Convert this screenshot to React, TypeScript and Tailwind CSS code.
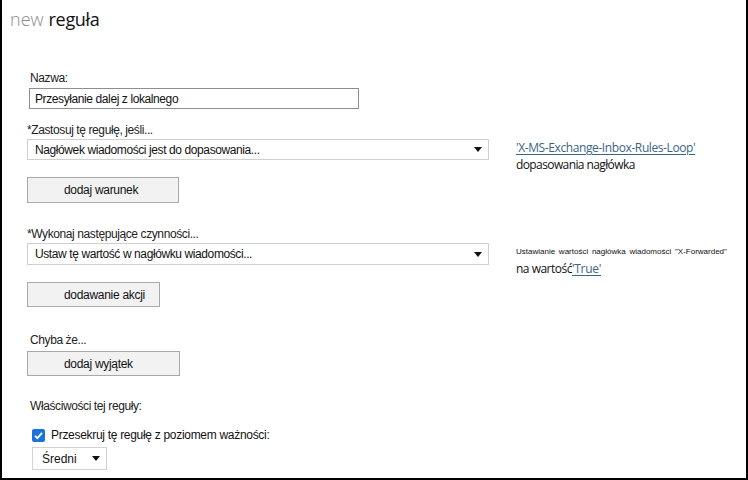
import React from "react";

const sans = { fontFamily: '"Liberation Sans", Arial, sans-serif' };
const openSans = { fontFamily: '"Open Sans", "Noto Sans", sans-serif' };

function Caret() {
  return (
    <svg width="8" height="5" viewBox="0 0 8 5" className="shrink-0">
      <path d="M0 0 L8 0 L4 5 Z" fill="#111" />
    </svg>
  );
}

function Select({ value, className }: { value: string; className: string }) {
  return (
    <div
      className={`flex items-center justify-between bg-white border border-[#cfcfcf] pl-[7px] pr-[6px] text-[12px] text-[#111] tracking-[-0.4px] ${className}`}
    >
      <span>{value}</span>
      <Caret />
    </div>
  );
}

function Button({ label, width, height, top }: { label: string; width: string; height: string; top: string }) {
  return (
    <div
      className={`${width} ${height} ${top} flex items-center pl-[36px] bg-[#f2f2f2] border border-[#a8a8a8] text-[12px] text-[#111] tracking-[-0.3px]`}
    >
      {label}
    </div>
  );
}

export default function App() {
  return (
    <div
      className="w-[748px] h-[480px] bg-white border-l-2 border-r-2 border-b-2 border-black overflow-hidden relative text-[#222]"
      style={sans}
    >
      {/* title */}
      <div className="ml-[8px] mt-[6px] h-[26px] text-[18px] leading-[26px] flex gap-[5px]" style={openSans}>
        <span className="text-[#8c8c8c] font-light">new</span>
        <span className="text-[#111] font-normal tracking-[-0.3px]">reguła</span>
      </div>

      {/* name */}
      <div className="ml-[28px] mt-[39px] text-[12px] leading-[14px] tracking-[-0.4px]">Nazwa:</div>
      <div className="ml-[27px] mt-[3px] w-[330px] h-[21px] border border-[#8e8e8e] flex items-center pl-[5px] text-[12px] text-[#111] tracking-[-0.4px]">
        Przesyłanie dalej z lokalnego
      </div>

      {/* conditions */}
      <div className="flex mt-[14px]">
        <div className="ml-[25px] w-[462px] flex flex-col">
          <div className="text-[12px] leading-[14px] tracking-[-0.4px]">*Zastosuj tę regułę, jeśli...</div>
          <Select value="Nagłówek wiadomości jest do dopasowania..." className="mt-[2px] h-[21px] w-[462px]" />
          <Button label="dodaj warunek" width="w-[152px]" height="h-[26px]" top="mt-[17px]" />
        </div>
        <div className="ml-[27px] mt-[17px] text-[12px] leading-[15px]" style={openSans}>
          <div className="text-[#3b6584] underline underline-offset-2 tracking-[-0.4px]">
            'X-MS-Exchange-Inbox-Rules-Loop'
          </div>
          <div className="text-[#111] mt-[2px] tracking-[-0.6px]">dopasowania nagłówka</div>
        </div>
      </div>

      {/* actions */}
      <div className="flex mt-[24px]">
        <div className="ml-[25px] w-[462px] flex flex-col">
          <div className="text-[12px] leading-[14px] tracking-[-0.4px]">*Wykonaj następujące czynności...</div>
          <Select value="Ustaw tę wartość w nagłówku wiadomości..." className="mt-[2px] h-[22px] w-[462px]" />
          <Button label="dodawanie akcji" width="w-[133px]" height="h-[25px]" top="mt-[17px]" />
        </div>
        <div className="ml-[27px] mt-[19px]">
          <div className="text-[8px] leading-[11px] text-[#111] whitespace-nowrap [word-spacing:1.5px]">
            Ustawianie wartości nagłówka wiadomości "X-Forwarded"
          </div>
          <div className="mt-[5px] text-[12px] leading-[14px] text-[#111]" style={openSans}>
            <span className="tracking-[-0.5px]">na wartość</span>
            <span className="text-[#3b6584] underline underline-offset-2 tracking-[-0.3px]">'True'</span>
          </div>
        </div>
      </div>

      {/* exceptions */}
      <div className="ml-[28px] mt-[26px] text-[12px] leading-[14px] tracking-[-0.4px]">Chyba że...</div>
      <div className="ml-[25px]">
        <Button label="dodaj wyjątek" width="w-[153px]" height="h-[25px]" top="mt-[4px]" />
      </div>

      {/* properties */}
      <div className="ml-[28px] mt-[23px] text-[12px] leading-[14px] tracking-[-0.4px]">Właściwości tej reguły:</div>
      <div className="ml-[30px] mt-[15px] flex items-center gap-[6px] h-[14px]">
        <span className="w-[13px] h-[13px] rounded-[2px] bg-[#1a73d9] flex items-center justify-center">
          <svg width="11" height="11" viewBox="0 0 11 11">
            <path d="M2 5.8 L4.4 8.2 L9 2.8" stroke="white" strokeWidth="1.8" fill="none" />
          </svg>
        </span>
        <span className="text-[12px] leading-[14px] text-[#111] tracking-[-0.3px]">
          Przesekruj tę regułę z poziomem ważności:
        </span>
      </div>
      <div className="ml-[30px] mt-[5px] w-[75px] h-[23px] border border-[#d2d2d2] flex items-center justify-between pl-[9px] pr-[6px] text-[12px] text-[#111]">
        <span>Średni</span>
        <Caret />
      </div>
    </div>
  );
}
